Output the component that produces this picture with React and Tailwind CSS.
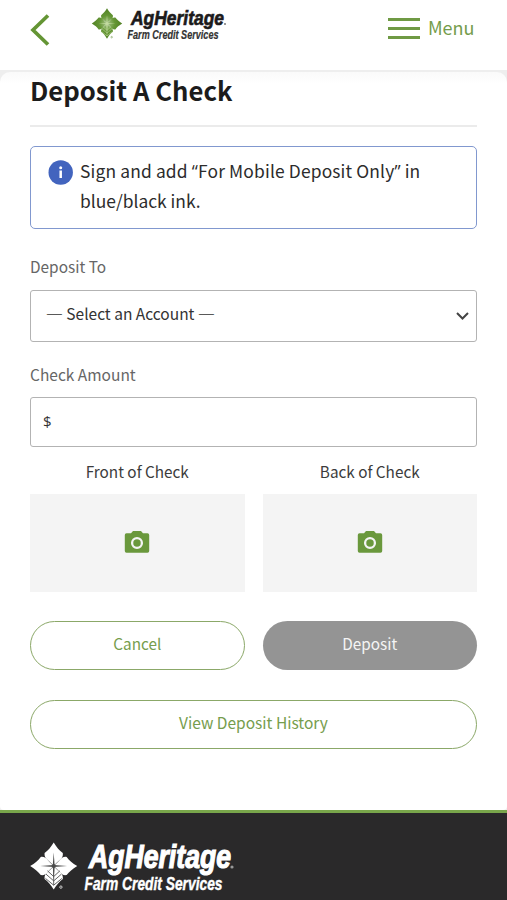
import React from "react";

function Petals({ fill, vein, ...rest }) {
  const petal = "M50 50 C45 44 41 41 38 38 C33 34 30 30 31 23 C38 18 44 11 50 1 C56 11 62 18 69 23 C70 30 67 34 62 38 C59 41 55 44 50 50Z";
  return (
    <g {...rest}>
      {[0, 90, 180, 270].map((a) => (
        <g key={a} transform={`rotate(${a} 50 50)`}>
          <path d={petal} fill={fill} />
          <path d="M48 50L50 22L52 50Z" fill={vein} />
        </g>
      ))}
      <path d="M50 50V90M50 72L37 60M50 72L63 60M50 81L34 67M50 81L66 67M50 90L33 76M50 90L67 76" stroke={vein} strokeWidth="1.800" fill="none" />
      <circle cx="50" cy="50" r="4" fill={vein} />
      <circle cx="65" cy="94" r="2.500" fill="none" stroke={fill} strokeWidth="1.500" />
    </g>
  );
}

const narrow = "font-['Liberation_Sans_Narrow','Liberation_Sans',sans-serif] font-bold italic";

function HeaderLogo() {
  return (
    <svg className="block overflow-visible" width="140" height="42" viewBox="0 0 140 42">
      <defs>
        <radialGradient id="leaf" gradientUnits="userSpaceOnUse" cx="50" cy="50" r="50">
          <stop offset="0" stopColor="#a8c58a" />
          <stop offset="0.5" stopColor="#659635" />
          <stop offset="1" stopColor="#4f7f22" />
        </radialGradient>
      </defs>
      <g transform="translate(.5 3) scale(.31)"><Petals fill="url(#leaf)" vein="#c3dca0" /></g>
      <text className={narrow} x="40" y="19.800" fontSize="21" textLength="93" lengthAdjust="spacingAndGlyphs" fill="#1c1a1b" stroke="#1c1a1b" strokeWidth=".7">AgHeritage</text>
      <circle cx="134" cy="19" r="1" fill="#777" />
      <text className={narrow} x="36.500" y="34" fontSize="12" textLength="91" lengthAdjust="spacingAndGlyphs" fill="#333" stroke="#333" strokeWidth=".2">Farm Credit Services</text>
    </svg>
  );
}

function FooterLogo() {
  return (
    <svg className="block overflow-visible" width="220" height="60" viewBox="0 0 220 60">
      <g transform="translate(-.3 1) scale(.48)"><Petals fill="#fff" vein="#4a4a4a" /></g>
      <text className={narrow} x="59" y="27" fontSize="33" textLength="142" lengthAdjust="spacingAndGlyphs" fill="#fff" stroke="#fff" strokeWidth="1.200">AgHeritage</text>
      <circle cx="202" cy="26" r="1.600" fill="#999" />
      <text className={narrow} x="54.500" y="48.500" fontSize="17.500" textLength="138" lengthAdjust="spacingAndGlyphs" fill="#fff" stroke="#fff" strokeWidth=".4">Farm Credit Services</text>
    </svg>
  );
}

function CheckSide({ label }) {
  return (
    <div className="flex-1">
      <div className="h-[44px] text-center text-[15.300px] leading-[43px] text-[#3c3c3c]">{label}</div>
      <div className="flex h-[98px] items-center justify-center bg-[#f4f4f4]">
        <svg className="-mt-[3px] block" width="26" height="24" viewBox="0 0 26 24">
          <path d="M9 1H17L19 3.200H23.500Q25.200 3.200 25.200 5V21Q25.200 22.800 23.500 22.800H2.500Q.8 22.800 .8 21V5Q.8 3.200 2.500 3.200H7Z" fill="#6a983c" />
          <circle cx="13" cy="13" r="4.900" fill="none" stroke="#f4f4f4" strokeWidth="2.300" />
        </svg>
      </div>
    </div>
  );
}

export default function App() {
  return (
    <div className="flex h-[900px] w-[507px] flex-col overflow-hidden bg-white font-['Noto_Sans_CJK_SC','Noto_Sans',sans-serif] text-[#2c2c2c]">
      <header className="flex h-[70px] shrink-0 items-start">
        <svg className="mt-[13px] ml-[30px] block" width="20" height="34" viewBox="0 0 20 34">
          <path d="M18 2.500L3 17L18 31.500" fill="none" stroke="#649534" strokeWidth="3.700" />
        </svg>
        <div className="mt-[5px] ml-[41px]"><HeaderLogo /></div>
        <div className="mt-[18px] ml-[157px] flex w-[32px] flex-col gap-[6px]">
          <div className="h-[3px] bg-[#6f9a44]" />
          <div className="h-[3px] bg-[#6f9a44]" />
          <div className="h-[3px] bg-[#6f9a44]" />
        </div>
        <div className="mt-[14px] ml-[8px] text-[18px] leading-[26px] text-[#749c4b]">Menu</div>
      </header>
      <div className="shrink-0 bg-[#eeeeee] pt-[2px]">
        <main className="h-[738px] rounded-t-[10px] rounded-b-[4px] bg-gradient-to-b from-[#fafafa] to-white to-[12px] px-[30px]">
          <h1 className="h-[53px] text-[25.700px] leading-[36px] font-bold text-[#1c1c1c]">Deposit A Check</h1>
          <div className="h-[2px] bg-[#ebebeb]" />
          <div className="mt-[19px] flex h-[83px] rounded-[5px] border-[1.500px] border-[#8198cf] pt-[9px] pl-[17px]">
            <svg className="mt-[4px] block shrink-0" width="25" height="25" viewBox="0 0 25 25">
              <circle cx="12.700" cy="12.500" r="12.200" fill="#4264be" />
              <circle cx="12.700" cy="7.700" r="1.500" fill="#fff" />
              <path d="M12.700 10.500V18" stroke="#fff" strokeWidth="2.500" />
            </svg>
            <p className="ml-[7px] text-[17.400px] leading-[29px]"><span className="tracking-[0.150px]">Sign and add <span className="font-['Open_Sans']">“</span>For Mobile Deposit Only<span className="font-['Open_Sans']">”</span> in</span><br />blue/black ink.</p>
          </div>
          <div className="mt-[26px] h-[35px] text-[15.400px] leading-[22px] text-[#666]">Deposit To</div>
          <div className="flex h-[52px] items-center justify-between rounded-[3px] border-[1.500px] border-[#b3b3b3] pr-[7px] pl-[15px]">
            <span className="-mt-[4px] text-[15.500px] text-[#333]"><span className="text-[19px] leading-none font-light">—</span> Select an Account <span className="text-[19px] leading-none font-light">—</span></span>
            <svg className="block" width="14" height="10" viewBox="0 0 14 10">
              <path d="M2 2L7.500 7.500L13 2" fill="none" stroke="#444" strokeWidth="2" />
            </svg>
          </div>
          <div className="mt-[20px] h-[35px] text-[15.500px] leading-[24px] text-[#666]">Check Amount</div>
          <div className="flex h-[50px] items-center rounded-[3px] border-[1.500px] border-[#b3b3b3] pb-[2px] pl-[12px] font-['Open_Sans'] text-[15px] text-[#333]">$</div>
          <div className="mt-[3px] flex gap-[18px]">
            <CheckSide label="Front of Check" />
            <CheckSide label="Back of Check" />
          </div>
          <div className="mt-[29px] grid grid-cols-2 gap-[18px] text-[15.300px] leading-[43px]">
            <button className="block h-[49px] rounded-full border-[1.500px] border-[#8ba868] pb-[4px] text-[#769d4d]">Cancel</button>
            <button className="block h-[49px] rounded-full bg-[#949494] pb-[4px] text-[#f4f4f4]">Deposit</button>
          </div>
          <button className="mt-[30px] block h-[49px] w-full rounded-full border-[1.500px] border-[#8ba868] pb-[4px] text-[15.500px] leading-[43px] text-[#769d4d]">View Deposit History</button>
        </main>
      </div>
      <footer className="flex-1 border-t-[3px] border-[#79a64b] bg-[#2a292a] pt-[28px] pl-[30px]">
        <FooterLogo />
      </footer>
    </div>
  );
}
